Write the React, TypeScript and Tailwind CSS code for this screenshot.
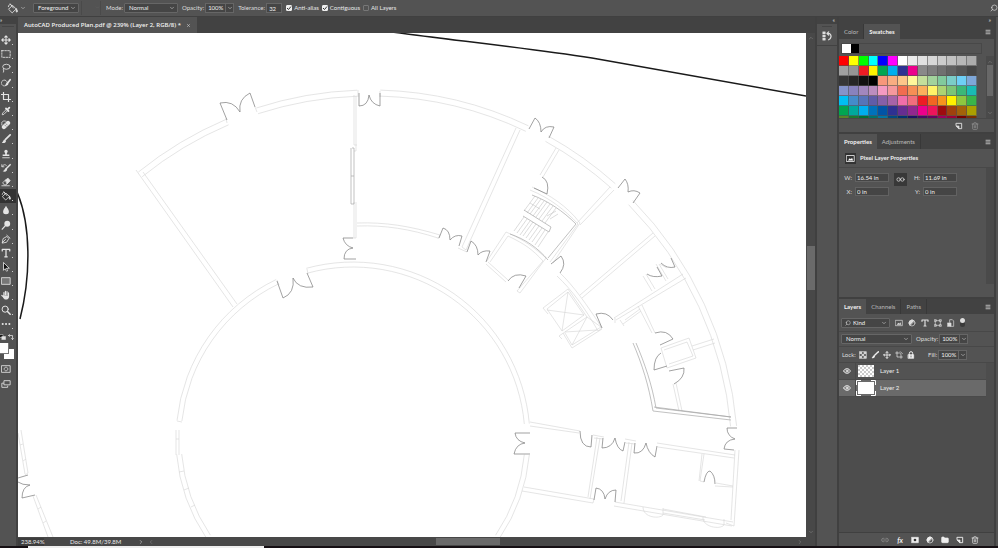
import type { ReactNode } from 'react';
import { ChevronDown, ChevronLeft, ChevronRight, ChevronUp, Eye, Folder, Link2, Menu, Search, Trash2, X } from 'lucide-react';

type IconProps = { children: ReactNode; className?: string };

// 12x12 line icon; solid parts set their own fill
function Icon({ children, className = 'size-[10px]' }: IconProps) {
    return (
        <svg viewBox="0 0 12 12" className={`${className} shrink-0`} fill="none" stroke="currentColor" strokeWidth={1} strokeLinecap="round" strokeLinejoin="round" aria-hidden="true">
            {children}
        </svg>
    );
}

const bucket = (
    <>
        <path d="M2 6.5 6 2.5 10 6.5 6 10.5Z" />
        <path d="M3.5 1 7 5.5M1.5 4C2 1 4.500 .5 5 3" />
        <path d="M10.300 6.500C11.500 8 11.700 9.500 10.900 10 10 10 9.600 8.500 10.300 6.500Z" fill="currentColor" />
    </>
);
const brush = (
    <>
        <path d="M11 1 5.500 6.500" strokeWidth={2} />
        <path d="M4.800 6.500C2.500 6.500 3 9 1 10.500 4 11.500 6 10 6 8Z" fill="currentColor" stroke="none" />
    </>
);
const moveIcon = <path d="M6 1V11M1 6H11M4.500 2.500 6 1 7.500 2.500M4.500 9.500 6 11 7.500 9.500M2.500 4.500 1 6 2.500 7.500M9.500 4.500 11 6 9.500 7.500" strokeWidth={1.3} />;
const newSheet = (
    <>
        <path d="M2 2H10V10H6L2 6Z" strokeWidth={1.4} />
        <path d="M2 6H6V10Z" fill="currentColor" />
    </>
);
const halfCircle = (
    <>
        <circle cx="6" cy="6" r="4.500" />
        <path d="M9.200 2.800A4.500 4.500 0 0 0 2.800 9.200Z" fill="currentColor" />
    </>
);
const picture = (
    <>
        <rect x="1" y="2" width="10" height="8" />
        <path d="M2.500 8.500 5 5.500 6.500 7 8 5 9.500 8.500Z" fill="currentColor" stroke="none" />
    </>
);

const tools = [
    { name: 'Move', art: moveIcon },
    { name: 'Rectangular Marquee', art: <rect x="1" y="2" width="10" height="8" strokeDasharray="2 1.500" /> },
    { name: 'Lasso', art: <><ellipse cx="6.500" cy="4.500" rx="4.500" ry="3" /><path d="M3 6.500C1.500 8 4.500 8.500 3 11" /></> },
    { name: 'Quick Selection', art: <><circle cx="4" cy="6" r="3.500" strokeDasharray="1.500 1.200" /><path d="M11 2 8 6" strokeWidth={2} /><path d="M7.500 5.500 9 7C8 9.500 6 9.500 4.500 9 6 8 6 6 7.500 5.500Z" fill="currentColor" stroke="none" /></> },
    { name: 'Crop', art: <path d="M3 0V9H12M0 3H9V12" strokeWidth={1.4} /> },
    { name: 'Eyedropper', art: <><path d="M6.500 4 2 8.500 1.500 10.500 3.500 10 8 5.500" /><path d="M6 3 9 6M8 4 10 2" strokeWidth={2.2} /></> },
    { name: 'Healing Brush', art: <><path d="M3.500 8.500 8.500 3.500" strokeWidth={5} /><path d="M1 6V3C2 1 4 1 6 1.500" strokeDasharray="1 1" /><path d="M4.500 6 6 7.500M6 4.500 7.500 6" stroke="#535353" strokeWidth={.7} /></> },
    { name: 'Brush', art: brush },
    { name: 'Clone Stamp', art: <><circle cx="6" cy="3" r="2" fill="currentColor" stroke="none" /><path d="M5 4H7V6.500H10V8.500H2V6.500H5Z" fill="currentColor" stroke="none" /><path d="M2 10.500H10" /></> },
    { name: 'History Brush', art: <><path d="M11 2 6.500 6.500" strokeWidth={1.8} /><path d="M6 6 7.500 8C6 11 4 10.500 2 10 4.500 9 4 7 6 6Z" fill="currentColor" stroke="none" /><path d="M1 2V4.500H3.500M1.500 4C3 1.500 5 1.500 6.500 3" /></> },
    { name: 'Eraser', art: <><path d="M5.500 3.500 8.500 1.500 11 4.500 7.500 8Z" fill="currentColor" /><path d="M5.500 3.500 2 7 4 9.500H6L7.500 8M1 10.500H10" /></> },
    { name: 'Paint Bucket', art: bucket, active: true },
    { name: 'Blur', art: <path d="M6 1C7.500 4 9.500 5.500 9.500 8A3.500 3 0 0 1 2.500 8C2.500 5.500 4.500 4 6 1Z" fill="currentColor" stroke="none" /> },
    { name: 'Dodge', art: <><circle cx="7.500" cy="4.500" r="3.500" fill="currentColor" stroke="none" /><path d="M5 7 1.500 11" strokeWidth={1.5} /></> },
    { name: 'Pen', art: <path d="M1.500 10.500 2.500 5.500 7 3 9.500 5.500 7 9.500ZM1.500 10.500 5.500 6.500M7 1.500 10.800 5" /> },
    { name: 'Type', art: <path d="M1.500 3.500V1.500H10.500V3.500M6 1.500V10.500M4.500 10.500H7.500" strokeWidth={1.5} /> },
    { name: 'Path Selection', art: <path d="M3 1V10L5 8 6.500 11 8 10.500 6.500 7.500H9.500Z" fill="#111" /> },
    { name: 'Rectangle', art: <rect x="1" y="2" width="10" height="8" fill="#777" /> },
    { name: 'Hand', art: <><path d="M3.500 7V3M5.300 6V1.500M7.200 6V2M9 7V3.500M3 8 1 6.500" strokeWidth={1.400} /><path d="M2.500 6.500H9.700V8C9.500 10 8 11.500 6 11.500 4 11.500 3 10 2 8Z" fill="currentColor" stroke="none" /></> },
    { name: 'Zoom', art: <><circle cx="5" cy="5" r="3.700" strokeWidth={1.2} /><path d="M7.800 7.800 11 11" strokeWidth={1.8} /></> },
    { name: 'Edit Toolbar', art: <path d="M2 6H2.100M6 6H6.100M10 6H10.100" strokeWidth={2.4} /> },
];

const swatchRows = [
    ['#ff0000', '#ffff00', '#00ff00', '#00ffff', '#0000ff', '#ff00ff', '#ffffff', '#ebebeb', '#e1e1e1', '#d7d7d7', '#cccccc', '#c2c2c2', '#b7b7b7', '#acacac'],
    ['#a0a0a0', '#959595', '#ed1c24', '#fff200', '#00a651', '#00aeef', '#2e3192', '#ec008c', '#898989', '#7d7d7d', '#707070', '#626262', '#555555', '#464646'],
    ['#363636', '#262626', '#111111', '#000000', '#f7977a', '#f9ad81', '#fdc68a', '#fff79a', '#c4df9b', '#a2d39c', '#82ca9d', '#7bcdc8', '#6ecff6', '#7ea7d8'],
    ['#8493ca', '#8882be', '#a187be', '#bc8dbf', '#f49ac2', '#f6989d', '#f26c4f', '#f68e55', '#fbaf5c', '#fff467', '#acd372', '#7cc576', '#3bb878', '#1abbb4'],
    ['#00bff3', '#438cca', '#5574b9', '#605ca8', '#855fa8', '#a763a8', '#f06ea9', '#f26d7d', '#ed1c24', '#f26522', '#f7941d', '#fff200', '#8dc73f', '#39b54a'],
    ['#00a651', '#00a99d', '#00aeef', '#0072bc', '#0054a6', '#2e3192', '#662d91', '#92278f', '#ec008c', '#ed145b', '#9e0b0f', '#a0410d', '#a36209', '#aba000'],
    ['#598527', '#1a7b30', '#007236', '#00746b', '#0076a3', '#004b80', '#003471', '#1b1464', '#440e62', '#630460', '#9e005d', '#9e0039', '#790000', '#7b2e00'],
];

/** Arc centred on (cx, cy), angles in degrees running clockwise from the right. */
const arc = (cx: number, cy: number, r: number, from: number, to: number) => {
    const at = (deg: number) => {
        const t = (deg * Math.PI) / 180;
        return `${(cx + r * Math.cos(t)).toFixed(1)} ${(cy + r * Math.sin(t)).toFixed(1)}`;
    };
    return `M${at(from)}A${r} ${r} 0 0 1 ${at(to)}`;
};

const outerSpans = [[231, 247], [252, 268], [271.6, 295.5], [299, 311.8], [315.6, 355]];
const innerSpans = [[146, 175], [186, 244.3], [254.7, 355], [5.2, 34]];

const walls = [
    ...outerSpans.flatMap(([a, b]) => [arc(370, 458, 368, a, b), arc(370, 458, 362, a, b)]),
    ...innerSpans.flatMap(([a, b]) => [arc(353, 439, 177, a, b), arc(353, 439, 172, a, b)]),
    // west wing
    'M136 170 233 307M143 172 237 304M226 118 227 123M255 107 257 112M277 280 279 285M307 269 308 274',
    'M354 95V145H357M356 96V151H354M354 202V238M356 202V238H353M358 90V97M380 91V97',
    'M177 421 182 422M176 430V455M179 430V455M176 439H179M179 472 184 471M184 490 189 488M191 507 195 505',
    // corridor
    'M357 223C385 222 410 226 440 235M357 226C385 225 410 229 438 238M440 235 438 239',
    'M516 128 462 247 466 250 520 130M458 248 467 252M488 262 508 280M486 264 506 282',
    'M560 273C573 285 587 305 602 328L598 331C585 308 572 290 557 276',
    // stair block
    'M556 148 540 175M559 150 543 177M610 187 577 223M614 190 580 225M530 190C550 198 565 210 578 224L550 262',
    'M532 187C550 195 567 206 580 223L553 263M487 261 506 232C525 240 537 250 546 258L520 293 517 291 543 261',
    'M490 262 508 236C525 244 533 250 543 261M653 233 580 295M655 236 582 298',
    // lifts
    'M548 314 543 308 568 289 587 317 559 336 562 339M547 309 568 292 584 315 562 331ZM568 292 562 331M547 310 584 315',
    'M563 333 572 348 602 329M587 317 601 327 572 345 565 333M587 317 572 345M565 332 597 330',
    // east rooms
    'M683 274 614 318M686 278 616 320M620 320 624 326M623 324 641 311M625 320 640 309M638 306 652 333M642 305 655 333',
    'M643 276 652 291M646 274 655 289M656 264 666 281M659 264 668 279M660 264 667 268',
    'M661 348 689 338 696 358 667 368ZM664 350 687 342 693 356 669 364M692 346 714 339M693 350 715 343M673 384 679 411M676 383 682 411M615 318V323',
    // south-east rooms
    'M530 422 580 431M530 426 579 433M593 435 604 437M594 438 603 439M625 439 636 441M626 443 635 444M657 443 735 455M658 447 734 458',
    'M597 437 588 497M600 438 590 499M629 442 621 501M632 443 624 503M524 487 594 499 593 503 522 491',
    'M615 502 733 522M614 506 732 526M739 450 734 526 726 523M735 450 731 520M704 454 700 481 704 482M702 454 699 481M716 483 733 486M715 486 733 487',
    'M643 507C643 518 660 519 663 515V508M703 517C702 527 720 530 724 525V519M663 509 706 517M663 513 705 520',
    // neighbouring building
    'M21 430 28 473M18 433 25 474M28 473 25 475M33 496 48 537M36 495 53 537M20 445 23 444M23 461 26 459M38 509 41 507M43 523 46 521',
];

const treads = 'M535 196 524 211M538 198 527 213M541 199 530 214M544 201 533 216M547 202 536 217M550 204 539 219M553 206 542 221M556 208 545 223M530 203 540 209M547 216 556 211M550 219 558 214M524 217 514 231M527 219 517 233M530 221 520 235M533 222 523 236M536 224 526 238M539 226 529 240M542 228 532 242M545 230 535 245M548 232 538 247';

const heavyWalls = [
    'M524 210 551 227 549 232 523 216M532 195C548 201 563 211 576 224L548 258M510 234C525 239 538 248 548 260',
    'M633 343C642 364 649 386 653 411L731 420M636 343C645 364 652 385 656 408L731 417M654 407 731 417',
    'M352 148H354V204H351V148M351 176H354',
];

const doors = [
    'M227 120 220 103Q233 100 240 112M255 107 250 93Q238 99 240 112',
    'M359 93V106Q368 106 369 95M380 93V106Q371 104 369 95',
    'M353 238H343Q345 246 353 248M356 259H344Q344 249 353 248',
    'M277 281 283 298Q295 293 293 278M307 273 313 287Q298 289 293 278',
    'M529 129 535 118Q541 122 541 132M549 138 554 127Q545 125 541 132',
    'M618 188 625 179Q629 184 628 192M633 203 640 193Q634 189 628 192',
    'M439 238 443 228Q450 230 450 240M459 246 462 236Q455 234 450 240',
    'M467 252 471 241Q478 245 478 255M486 262 490 251Q482 250 478 255',
    'M542 177Q550 181 547 194L534 188M551 264 561 256Q567 264 560 273M508 281Q514 272 526 276L519 288',
    'M602 328 596 314Q607 311 613 320M647 274Q653 278 662 276L657 267M661 263Q667 269 675 267L671 258',
    'M655 333Q667 329 673 339L660 345M661 353Q654 357 654 370L667 366M669 371 684 368Q685 378 674 384',
    'M530 433H515Q516 441 525 443M530 454H514Q516 444 525 443',
    'M580 431Q580 447 591 447L592 435M603 438 602 448Q612 448 615 438M625 442 623 451Q617 449 615 438',
    'M635 443 634 453Q643 454 646 443M657 446 655 457Q648 453 646 443',
    'M594 500 596 488Q604 489 605 499M615 502 616 490Q608 490 605 499M704 482Q706 471 710 471 715 475 715 484',
    'M737 428H727Q727 436 735 439M734 450 724 449Q725 440 735 439',
    'M28 475 18 478M18 482Q22 485 30 485M30 485Q22 487 22 498L35 495',
];

function FloorPlan() {
    return (
        <svg viewBox="18 33 788 504" preserveAspectRatio="xMinYMin slice" className="block size-full" fill="none" role="img" aria-label="Floor plan">
            <path d={walls.join('')} stroke="#d4d4d4" strokeWidth={.6} />
            <path d={treads} stroke="#c4c4c4" strokeWidth={.6} />
            <path d={heavyWalls.join('')} stroke="#a6a6a6" strokeWidth={.7} />
            <path d={doors.join('')} stroke="#7a7a7a" strokeWidth={.7} />
            <path d="M392 32C450 40 520 47 592 58L806 96" stroke="#1a1a1a" strokeWidth={1.500} />
            <path d="M17 192C31 224 31 276 20 319" stroke="#1a1a1a" strokeWidth={1.500} />
        </svg>
    );
}

type DropProps = { label: string; value: string; className: string; padding?: string };

function Drop({ label, value, className, padding = 'pl-1' }: DropProps) {
    return (
        <div className={`relative h-[10px] rounded-[1px] border border-[#666] bg-[#454545] ${className}`}>
            <select aria-label={label} className={`block h-[8px] w-full appearance-none bg-transparent leading-[8px] text-[#f0f0f0] ${padding}`}>
                <option>{value}</option>
            </select>
            <ChevronDown className="pointer-events-none absolute top-[1px] right-[2px] size-[6px]" />
        </div>
    );
}

function Percent({ id, label, value }: { id: string; label: string; value: string }) {
    return (
        <div className="flex items-center gap-[1px]">
            <label htmlFor={id}>{label}</label>
            <div className="flex h-[10px] border border-[#666] bg-[#454545]">
                <input id={id} defaultValue={value} className="w-[19px] pl-[2px] leading-[8px] text-[#f0f0f0]" />
                <button aria-label={`${label} slider`} className="flex w-[8px] items-center justify-center border-l border-[#666]">
                    <ChevronDown className="size-[6px]" />
                </button>
            </div>
        </div>
    );
}

function Check({ label, checked = false }: { label: string; checked?: boolean }) {
    return (
        <label className="flex items-center gap-[2px]">
            <span className="relative flex size-[6px]">
                <input type="checkbox" defaultChecked={checked} className="peer size-[6px] appearance-none rounded-[1px] border border-[#777] checked:border-[#eee] checked:bg-[#eee]" />
                <svg viewBox="0 0 6 6" className="pointer-events-none absolute inset-0 hidden peer-checked:block" fill="none" stroke="#333"><path d="M1 3 2.500 4.500 5 1.500" /></svg>
            </span>
            {label}
        </label>
    );
}

function TabBar({ tabs, active }: { tabs: string[]; active: string }) {
    return (
        <div className="flex h-[15px] shrink-0 items-stretch bg-[#424242]">
            <div role="tablist" className="flex">
                {tabs.map((tab) => (
                    <button
                        key={tab}
                        role="tab"
                        aria-selected={tab === active}
                        className={tab === active ? 'bg-[#535353] px-[5px] font-bold text-[#f2f2f2]' : 'border-r border-[#383838] px-[5px] text-[#bbb]'}
                    >
                        {tab}
                    </button>
                ))}
            </div>
            <button aria-label="Panel menu" className="mr-[3px] ml-auto"><Menu className="size-[6px]" strokeWidth={3} /></button>
        </div>
    );
}

function OptionsBar() {
    return (
        <header className="flex h-[17px] items-center border-b border-[#404040] pl-[7px]">
            <Icon className="size-[11px]">{bucket}</Icon>
            <ChevronDown className="ml-[2px] size-[6px]" />
            <Drop label="Fill source" value="Foreground" className="ml-[7px] w-[46px]" />
            <span className="ml-[2px] flex h-[14px] w-[20px] justify-end border-x border-[#4a4a4a] pt-[4px]"><ChevronDown className="size-[5px] text-[#6c6c6c]" /></span>
            <span className="ml-[5px] w-[18px]">Mode:</span>
            <Drop label="Mode" value="Normal" className="w-[54px]" />
            <div className="ml-[4px]"><Percent id="fill-opacity" label="Opacity:" value="100%" /></div>
            <label htmlFor="tolerance" className="ml-[4px] w-[28px]">Tolerance:</label>
            <input id="tolerance" defaultValue="32" className="h-[10px] w-[16px] border border-[#666] bg-[#454545] pl-[2px] text-[#f0f0f0]" />
            <div className="ml-[4px] flex gap-[3px] text-[#e8e8e8]">
                <Check label="Anti-alias" checked />
                <Check label="Contiguous" checked />
                <Check label="All Layers" />
            </div>
            <button aria-label="Search" className="ml-auto"><Search className="size-[8px] -scale-x-100" /></button>
        </header>
    );
}

function Toolbar() {
    return (
        <nav aria-label="Tools" className="flex w-[18px] shrink-0 flex-col border-r-2 border-[#424242] text-[#e4e4e4]">
            <div className="h-[7px] bg-[#424242] text-[5px] leading-[6px]">»</div>
            <div className="mx-[2px] mt-[2px] mb-[6px] h-[1px] bg-[#454545]" />
            <div className="flex h-[298px] flex-col">
                {tools.map((tool) => (
                    <button key={tool.name} aria-label={tool.name} className={`flex flex-1 items-center pl-[1px] ${tool.active ? 'bg-[#333]' : ''}`}>
                        <Icon>{tool.art}</Icon>
                        <span className="mt-[9px] ml-[1px] size-[1px] bg-[#ccc]" />
                    </button>
                ))}
            </div>
            <div className="flex justify-between pt-[3px] pr-[2px]">
                <Icon className="size-[6px]"><path d="M0 1H6V7H0Z" fill="#111" /><path d="M4 5H11V11H4Z" fill="currentColor" /></Icon>
                <Icon className="size-[6px]"><path d="M1 3H9V11M3 1 1 3 3 5M7 9 9 11 11 9" strokeWidth={1.500} /></Icon>
            </div>
            <div className="relative mt-[3px] h-[17px]">
                <button aria-label="Background colour" className="absolute top-[6px] left-[4px] size-[10px] bg-white" />
                <button aria-label="Foreground colour" className="absolute top-0 left-0 h-[11px] w-[9px] border-r border-b border-[#777] bg-white" />
            </div>
            <button aria-label="Quick mask" className="mt-[4px] pl-[1px]"><Icon><rect x="1" y="2" width="10" height="8" /><circle cx="6" cy="6" r="2.200" strokeDasharray="1 1" /></Icon></button>
            <button aria-label="Screen mode" className="mt-[5px] pl-[1px]"><Icon><rect x="4" y="2" width="7" height="5" /><path d="M3 5H1V10H8V8.500" /></Icon></button>
        </nav>
    );
}

function Document() {
    return (
        <main className="flex min-w-0 flex-1 flex-col">
            <div className="flex h-[16px] shrink-0 bg-[#424242]">
                <div className="flex items-center gap-[5px] bg-[#535353] px-[6px] font-['Open_Sans',sans-serif] font-semibold text-[#f2f2f2]">
                    AutoCAD Produced Plan.pdf @ 239% (Layer 2, RGB/8) *
                    <button aria-label="Close document"><X className="size-[5px]" /></button>
                </div>
            </div>
            <div className="flex min-h-0 flex-1">
                <div className="min-w-0 flex-1 bg-white"><FloorPlan /></div>
                <div className="flex w-[9px] flex-col items-center bg-[#484848] py-[2px] text-[#888]">
                    <ChevronUp className="size-[6px]" />
                    <div className="flex-[205]" />
                    <div className="h-[44px] w-[8px] bg-[#6a6a6a]" />
                    <div className="flex-[239]" />
                    <ChevronDown className="size-[6px]" />
                </div>
            </div>
            <footer className="flex h-[9px] shrink-0 items-center bg-[#484848] text-[#e8e8e8]">
                <span className="w-[26px] bg-[#3d3d3d] pl-[3px] leading-[8px]">238.94%</span>
                <span className="ml-[26px] w-[68px]">Doc: 49.8M/39.8M</span>
                <ChevronRight className="size-[6px]" />
                <ChevronLeft className="ml-[4px] size-[6px] text-[#888]" />
                <div className="flex h-[7px] flex-1">
                    <div className="flex-[282]" />
                    <div className="w-[64px] bg-[#6a6a6a]" />
                    <div className="flex-[296]" />
                </div>
                <ChevronRight className="mr-[12px] size-[6px] text-[#888]" />
            </footer>
        </main>
    );
}

function SwatchesPanel() {
    return (
        <section className="h-[110px] overflow-hidden border-b-2 border-[#404040]">
            <TabBar tabs={['Color', 'Swatches']} active="Swatches" />
            <div className="mt-[4px] mr-[12px] ml-[2px] flex h-[11px] border border-[#484848]">
                <span className="w-[9px] bg-white" />
                <span className="w-[8px] bg-black" />
            </div>
            <div className="mt-[2px] flex h-[62px]">
                <div className="grid w-[138px] auto-rows-[10px] grid-cols-14 gap-0 overflow-hidden bg-[#484848]">
                    {swatchRows.flat().map((color, i) => (
                        <button key={i} aria-label={`Swatch ${color}`} className="border-r border-b border-[#505050]/60" style={{ backgroundColor: color }} />
                    ))}
                </div>
                <div className="ml-auto flex w-[8px] flex-col items-center bg-[#4a4a4a] pt-[3px] text-[#888]">
                    <ChevronUp className="size-[6px]" />
                    <div className="h-[31px] w-[6px] bg-[#686868]" />
                    <ChevronDown className="mt-auto mb-[2px] size-[6px]" />
                </div>
            </div>
            <div className="flex h-[14px] items-center justify-end gap-[8px] border-t border-[#484848] pr-[15px]">
                <button aria-label="New swatch"><Icon className="size-[8px]">{newSheet}</Icon></button>
                <button aria-label="Delete swatch"><Trash2 className="size-[8px] text-[#999]" /></button>
            </div>
        </section>
    );
}

function Measure({ id, label, value }: { id: string; label: string; value: string }) {
    return (
        <div className="flex items-center gap-[3px]">
            <label htmlFor={id} className="w-[8px] text-right">{label}</label>
            <input id={id} defaultValue={value} className="h-[9px] w-[34px] border border-[#626262] bg-[#454545] pl-[1px] text-[#f0f0f0]" />
        </div>
    );
}

function PropertiesPanel() {
    return (
        <section className="flex h-[165px] flex-col border-b-2 border-[#404040]">
            <TabBar tabs={['Properties', 'Adjustments']} active="Properties" />
            <div className="flex h-[19px] items-center gap-[4px] border-b border-[#484848] pl-[6px]">
                <span className="flex size-[11px] items-center justify-center bg-[#333] text-white"><Icon className="size-[9px]">{picture}</Icon></span>
                <h2 className="font-bold text-[#eee]">Pixel Layer Properties</h2>
            </div>
            <div className="flex h-[116px]">
                <div className="flex h-[32px] gap-[5px] pt-[5px] pl-[5px]">
                    <div className="flex flex-col gap-[5px]">
                        <Measure id="w" label="W:" value="16.54 in" />
                        <Measure id="x" label="X:" value="0 in" />
                    </div>
                    <button aria-label="Link width and height" className="flex h-[13px] w-[13px] items-center justify-center bg-[#383838]">
                        <Icon className="size-[9px]"><circle cx="3.500" cy="6" r="2.300" /><circle cx="8.500" cy="6" r="2.300" /></Icon>
                    </button>
                    <div className="flex flex-col gap-[5px]">
                        <Measure id="h" label="H:" value="11.69 in" />
                        <Measure id="y" label="Y:" value="0 in" />
                    </div>
                </div>
                <div className="ml-auto w-[8px] bg-[#4a4a4a]" />
            </div>
        </section>
    );
}

function LayerRow({ name, selected = false }: { name: string; selected?: boolean }) {
    return (
        <li className={`mr-[8px] flex h-[17px] items-center border-b border-[#4a4a4a] text-[#eee] ${selected ? 'bg-[#6a6a6a]' : 'bg-[#535353]'}`}>
            <button aria-label={`Toggle ${name}`} className="flex h-full w-[17px] items-center justify-center border-r border-[#4a4a4a]"><Eye className="size-[8px]" strokeWidth={3} /></button>
            <svg viewBox="0 0 20 16" className="h-[16px] w-[20px]" aria-hidden="true">
                <rect x="2" y="2" width="16" height="12" fill="#fff" />
                {selected
                    ? <path d="M.5 5V.5H5M15 .5H19.500V5M19.500 11V15.500H15M5 15.500H.5V11" fill="none" stroke="#fff" />
                    : <path d="M2 3H18M2 7H18M2 11H18M4 5H18M4 9H18M4 13H18" stroke="#ccc" strokeWidth={2} strokeDasharray="2 2" />}
            </svg>
            <span className="ml-[4px]">{name}</span>
        </li>
    );
}

function LayersPanel() {
    return (
        <section className="flex min-h-0 flex-1 flex-col">
            <TabBar tabs={['Layers', 'Channels', 'Paths']} active="Layers" />
            <div className="flex h-[18px] items-center gap-[5px] border-b border-[#484848] pl-[2px]">
                <div className="relative">
                    <Drop label="Filter" value="Kind" className="w-[49px]" padding="pl-[11px]" />
                    <Search className="pointer-events-none absolute top-[2px] left-[4px] size-[6px] -scale-x-100" />
                </div>
                <Icon className="size-[8px]">{picture}</Icon>
                <Icon className="size-[8px]">{halfCircle}</Icon>
                <Icon className="size-[8px]"><path d="M1.500 3.500V1.500H10.500V3.500M6 1.500V10.500M4.500 10.500H7.500" strokeWidth={1.800} /></Icon>
                <Icon className="size-[8px]"><path d="M2.500 2.500H9.500V9.500H2.500ZM1 1H3.500V3.500H1ZM8.500 1H11V3.500H8.500ZM1 8.500H3.500V11H1ZM8.500 8.500H11V11H8.500Z" /></Icon>
                <Icon className="size-[8px]"><path d="M4 5V1H8L10 3V11H6" /><rect x="1" y="6" width="5" height="5" fill="currentColor" /></Icon>
                <span className="h-[9px] w-[5px] rounded-full bg-[#3a3a3a]"><span className="block size-[5px] rounded-full bg-[#ddd]" /></span>
            </div>
            <div className="flex h-[15px] items-center gap-[4px] border-b border-[#484848] pl-[2px]">
                <Drop label="Blend mode" value="Normal" className="w-[71px]" />
                <Percent id="layer-opacity" label="Opacity:" value="100%" />
            </div>
            <div className="flex h-[16px] items-center border-b border-[#484848] pl-[3px]">
                <span className="w-[17px]">Lock:</span>
                <div className="flex gap-[4px] text-[#eee]">
                    <Icon className="size-[8px]"><rect x="1" y="1" width="10" height="10" /><path d="M2 2H4V4H2ZM8 2H10V4H8ZM5 5H7V7H5ZM2 8H4V10H2ZM8 8H10V10H8Z" fill="currentColor" /></Icon>
                    <Icon className="size-[8px]">{brush}</Icon>
                    <Icon className="size-[8px]">{moveIcon}</Icon>
                    <Icon className="size-[8px]"><path d="M3 1V9H11M1 3H7L9 5V11M8 1 11 4" /></Icon>
                    <Icon className="size-[8px]"><path d="M3.500 5.500V3.500A2.500 2.500 0 0 1 8.500 3.500V5.500" strokeWidth={1.500} /><path d="M2 5.500H10V11H2Z" fill="currentColor" /><path d="M6 7.500V9" stroke="#444" /></Icon>
                </div>
                <div className="ml-[13px]"><Percent id="fill" label="Fill:" value="100%" /></div>
            </div>
            <ul className="min-h-0 flex-1 bg-[#4d4d4d]">
                <LayerRow name="Layer 1" />
                <LayerRow name="Layer 2" selected />
            </ul>
            <div className="flex h-[14px] items-center justify-end gap-[7px] border-t border-[#404040] pr-[15px] text-[#eee]">
                <Link2 className="size-[8px] text-[#999]" />
                <button className="w-[8px] text-[7px] font-bold italic">fx</button>
                <Icon className="size-[8px]"><path d="M1 2H11V10H1Z" fill="currentColor" /><circle cx="6" cy="6" r="2" fill="#333" stroke="none" /></Icon>
                <Icon className="size-[8px]">{halfCircle}</Icon>
                <Folder className="size-[8px]" fill="currentColor" />
                <Icon className="size-[8px]">{newSheet}</Icon>
                <Trash2 className="size-[8px]" />
            </div>
        </section>
    );
}

export default function App() {
    return (
        <div className="flex h-screen flex-col overflow-hidden bg-[#535353] font-['Lato','Open_Sans',sans-serif] text-[6px] leading-[8px] text-[#dedede]">
            <OptionsBar />
            <div className="flex min-h-0 flex-1">
                <Toolbar />
                <Document />
                <aside className="w-[24px] shrink-0 border-r-2 border-l-2 border-[#404040]">
                    <div className="h-[7px] bg-[#424242] pr-[2px] text-right leading-[6px]">«</div>
                    <div className="mx-auto mt-[2px] h-[1px] w-[10px] bg-[#454545]" />
                    <button aria-label="History" className="flex h-[19px] w-full items-center justify-center border-b border-[#424242]">
                        <Icon className="size-[10px]"><path d="M1 1H4V3.500H1ZM1 4.800H4V7.200H1ZM1 8.500H4V11H1Z" fill="currentColor" strokeWidth={.5} /><path d="M6.500 3H9C12 5 11 9 8 10.500M8 1 6 3 8 5" strokeWidth={1.500} /></Icon>
                    </button>
                </aside>
                <aside className="flex w-[155px] shrink-0 flex-col">
                    <div className="h-[7px] shrink-0 bg-[#424242] pr-[3px] text-right leading-[6px]">»</div>
                    <SwatchesPanel />
                    <PropertiesPanel />
                    <LayersPanel />
                </aside>
                <div className="w-[4px] shrink-0 border-l-2 border-[#404040]" />
            </div>
            <div className="flex h-[2px] shrink-0 bg-[#161014]">
                <div className="w-[28px]" />
                <div className="w-[236px] bg-[#eee]" />
            </div>
        </div>
    );
}
